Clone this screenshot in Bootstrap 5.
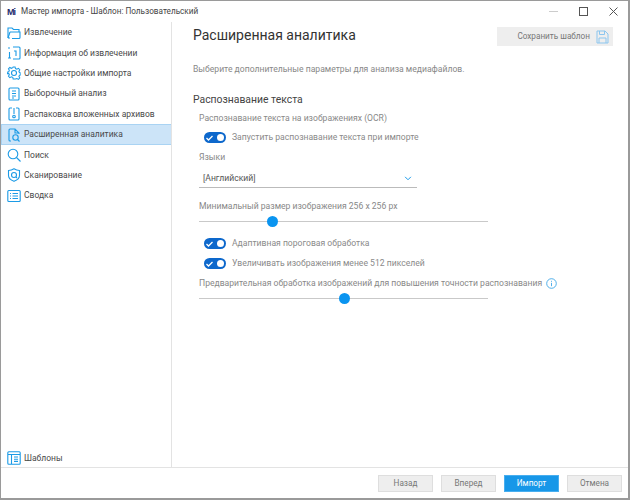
<!DOCTYPE html>
<html lang="ru"><head><meta charset="utf-8"><title>Мастер импорта</title>
<link rel="stylesheet" href="https://cdn.jsdelivr.net/npm/bootstrap@5.3.0/dist/css/bootstrap.min.css">
<style>
html,body{height:100%;margin:0;background:#fff;overflow:hidden}
body{font-family:Roboto,"Noto Sans",sans-serif;font-size:9px;color:#555}
.win{width:630px;height:500px;border:1px solid #9a9a9a;border-width:1px 2px 2px 1px;background:#fff}
.tbar{height:21px;padding-left:6px;color:#444;font-size:8.2px;gap:3px}
.logo{width:11px;font:bold 9px "Liberation Sans",sans-serif;color:#1d2a6d;letter-spacing:-1px}
.wbtns{margin-left:auto;gap:0}
.wbtn{width:30px;height:20px;display:flex;align-items:center;justify-content:center}
.bodyrow{height:445px}
.side{width:171px;border-right:1px solid #e3e3e3;flex:none;padding-top:.4px}
.navi{height:20.4px;padding-left:5px;gap:3px;color:#4a4a4a;font-size:8.5px;border:1px solid transparent;border-right:0;white-space:nowrap}
.navi svg{flex:none;width:14px;height:14px;fill:none;stroke:#1c9be6;stroke-width:1.1}
.navi.on{background:#cce4f8;border-color:#a9d3f3}
.tmpl{margin-top:auto;height:16px;margin-bottom:1px}
.main{padding:0 15px 0 21px;min-width:0}
.ttl{font-size:14px;color:#333;line-height:20px;margin-top:3px}
.savebtn{width:116px;height:19px;background:#eeeeee;border:0;color:#777;font-size:8.2px;padding:0 4px 0 0;gap:6px;justify-content:flex-end;margin-top:5px}
.savebtn svg{width:13px;height:14px;fill:none;stroke:#8cc6ef;stroke-width:1}
.sub{font-size:8.6px;color:#888;margin-top:16px;line-height:14px}
.sec{font-size:10.4px;color:#444;line-height:16px;margin-top:16px}
.lbl{font-size:8.6px;color:#888;line-height:13px;white-space:nowrap}
.ind{margin-left:6px}
.sw{width:22px;height:11px;border-radius:6px;background:#0d68cc;flex:none;padding:0 2px;justify-content:space-between}
.sw i{display:block;width:7px;height:7px;border-radius:50%;background:#fff}
.sw svg{width:7px;height:6px;fill:none;stroke:#fff;stroke-width:1.3}
.swrow{gap:6px;margin-left:11px;height:13px}
.swrow .lbl{color:#8a8a8a}
.sel{width:218px;height:19px;margin-left:6px;border-bottom:1px solid #bbb;padding:0 4px;color:#555;font-size:8.6px}
.sel svg{width:8px;height:5px;margin-right:1px;fill:none;stroke:#1e9bea;stroke-width:1.2}
.slider{width:289px;height:11px;margin-left:6px}
.slider::before{content:"";position:absolute;left:0;right:0;top:5px;height:1px;background:#c9c9c9}
.knob{position:absolute;top:0;width:11px;height:11px;border-radius:50%;background:#0a94f0}
.ftr{height:31px;border-top:1px solid #e3e3e3;padding-right:6px;gap:8px;justify-content:flex-end;align-items:center}
.fbtn{width:55px;height:17px;background:#eeeeee;border:1px solid #dedede;border-radius:0;color:#777;font-size:8.2px;padding:0;line-height:15px}
.fbtn.pri{background:#1797e8;border-color:#48aeef;color:#fff}
.inf{width:11px;height:11px;fill:none;stroke:#3ea7e8;stroke-width:.9;flex:none}
.gap-a{margin-top:4px}.gap-b{margin-top:6px}.gap-c{margin-top:7px}.gap-d{margin-top:5px}.gap-e{margin-top:12px}.gap-f{margin-top:3px}.gap-g{margin-top:10px}
</style></head><body>
<div class="win d-flex flex-column">
<div class="tbar d-flex align-items-center">
<span class="logo">Mi</span><span>Мастер импорта - Шаблон: Пользовательский</span>
<div class="wbtns d-flex">
<span class="wbtn"><svg width="9" height="9"><path d="M0 4.500h9" stroke="#ccc"/></svg></span>
<span class="wbtn"><svg width="9" height="9"><rect x=".5" y=".5" width="8" height="8" fill="none" stroke="#555"/></svg></span>
<span class="wbtn"><svg width="9" height="9"><path d="M.5.5l8 8M8.500.5l-8 8" stroke="#555" fill="none"/></svg></span>
</div></div>
<div class="bodyrow d-flex">
<div class="side d-flex flex-column">
<div class="navi d-flex align-items-center"><svg viewBox="0 0 14 14"><path d="M1 12V2h4l1.500 1.500H12V6M1 12h2M3 6h10v5.500a1 1 0 0 1-1 1H5"/><path d="M3 6L1 12"/></svg>Извлечение</div>
<div class="navi d-flex align-items-center"><svg viewBox="0 0 14 14"><path d="M1 2h2M2.500 6v6M1 12h3M6 1h6a1 1 0 0 1 1 1v10a1 1 0 0 1-1 1H6"/><path d="M7 5h2v5"/></svg>Информация об извлечении</div>
<div class="navi d-flex align-items-center"><svg viewBox="0 0 14 14"><circle cx="7" cy="7" r="2.500"/><path d="M6 1h2l.4 1.700 1.500.7 1.600-.9 1.400 1.400-.9 1.600.6 1.500 1.700.4v1.600l-1.700.5-.6 1.400.9 1.600-1.400 1.400-1.600-.9-1.500.6L8 13.500H6l-.4-1.700-1.500-.6-1.600.9-1.400-1.400.9-1.600-.6-1.400L-.3 8V6.400l1.700-.4.6-1.500-.9-1.600 1.400-1.400 1.600.9 1.500-.7z" transform="translate(.4 0) scale(.96)"/></svg>Общие настройки импорта</div>
<div class="navi d-flex align-items-center"><svg viewBox="0 0 14 14"><rect x="2" y="1" width="10" height="12" rx="1"/><path d="M5 4h4M5 6.500h4M5 9h4M5 11h2"/></svg>Выборочный анализ</div>
<div class="navi d-flex align-items-center"><svg viewBox="0 0 14 14"><path d="M5 1H3a1 1 0 0 0-1 1v10a1 1 0 0 0 1 1h8a1 1 0 0 0 1-1V2a1 1 0 0 0-1-1H9"/><path d="M7 1v6"/><circle cx="7" cy="9.500" r="1.300"/></svg>Распаковка вложенных архивов</div>
<div class="navi on d-flex align-items-center"><svg viewBox="0 0 14 14"><path d="M4 13H3a1 1 0 0 1-1-1V2a1 1 0 0 1 1-1h5l4 4v1M8 1v4h4"/><circle cx="8.500" cy="9.500" r="2.700"/><path d="M10.500 11.500l2 2"/></svg>Расширенная аналитика</div>
<div class="navi d-flex align-items-center"><svg viewBox="0 0 14 14"><circle cx="6" cy="6" r="4.800"/><path d="M9.500 9.500L13.500 13.500"/></svg>Поиск</div>
<div class="navi d-flex align-items-center"><svg viewBox="0 0 14 14"><path d="M7 .8c1.500 1 3.500 1.700 5.500 1.700v5c0 2.800-2.500 4.700-5.500 5.800-3-1.100-5.500-3-5.500-5.800v-5C3.500 2.500 5.500 1.800 7 .8z"/><circle cx="7" cy="7" r="2.500"/><path d="M9 9l1 1"/></svg>Сканирование</div>
<div class="navi d-flex align-items-center"><svg viewBox="0 0 14 14"><rect x=".8" y="1.500" width="12.400" height="11" rx="1"/><path d="M3 4.500h1M3 7h1M3 9.500h1M5.500 4.500H11M5.500 7H11M5.500 9.500H11"/></svg>Сводка</div>
<div class="navi tmpl d-flex align-items-center"><svg viewBox="0 0 14 14"><rect x=".8" y=".8" width="12.400" height="12.400" rx="1"/><path d="M1 3.500h12M4.500 3.500v9.500M7 6h4M7 8.200h4M7 10.400h4"/></svg>Шаблоны</div>
</div>
<div class="main flex-grow-1 d-flex flex-column">
<div class="d-flex justify-content-between align-items-start"><div class="ttl">Расширенная аналитика</div>
<button class="savebtn btn d-flex align-items-center rounded-0" type="button">Сохранить шаблон<svg viewBox="0 0 13 14"><path d="M1 1h8l3 3v9H1z"/><path d="M3.500 1v3.500h5V1M3 13V8h7v5"/></svg></button></div>
<div class="sub">Выберите дополнительные параметры для анализа медиафайлов.</div>
<div class="sec">Распознавание текста</div>
<div class="lbl ind gap-a">Распознавание текста на изображениях (OCR)</div>
<div class="swrow d-flex align-items-center gap-b"><span class="sw d-flex align-items-center"><svg viewBox="0 0 7 6"><path d="M.5 3l2 2 4-4"/></svg><i></i></span><span class="lbl">Запустить распознавание текста при импорте</span></div>
<div class="lbl ind gap-c">Языки</div>
<div class="sel d-flex align-items-center justify-content-between gap-d"><span>[Английский]</span><svg viewBox="0 0 9 6"><path d="M1 1l3.500 3.500L8 1"/></svg></div>
<div class="lbl ind gap-e">Минимальный размер изображения 256 x 256 px</div>
<div class="slider position-relative gap-f"><span class="knob" style="left:68px"></span></div>
<div class="swrow d-flex align-items-center gap-g"><span class="sw d-flex align-items-center"><svg viewBox="0 0 7 6"><path d="M.5 3l2 2 4-4"/></svg><i></i></span><span class="lbl">Адаптивная пороговая обработка</span></div>
<div class="swrow d-flex align-items-center gap-c"><span class="sw d-flex align-items-center"><svg viewBox="0 0 7 6"><path d="M.5 3l2 2 4-4"/></svg><i></i></span><span class="lbl">Увеличивать изображения менее 512 пикселей</span></div>
<div class="d-flex align-items-center ind gap-1 gap-c"><span class="lbl">Предварительная обработка изображений для повышения точности распознавания</span><svg class="inf" viewBox="0 0 11 11"><circle cx="5.500" cy="5.500" r="4.800"/><path d="M5.500 4.800v3.400M5.500 2.800v1"/></svg></div>
<div class="slider position-relative gap-f"><span class="knob" style="left:140px"></span></div>
</div></div>
<div class="ftr d-flex">
<button class="btn fbtn" type="button">Назад</button><button class="btn fbtn" type="button">Вперед</button><button class="btn fbtn pri" type="button">Импорт</button><button class="btn fbtn" type="button">Отмена</button>
</div></div>
</body></html>
